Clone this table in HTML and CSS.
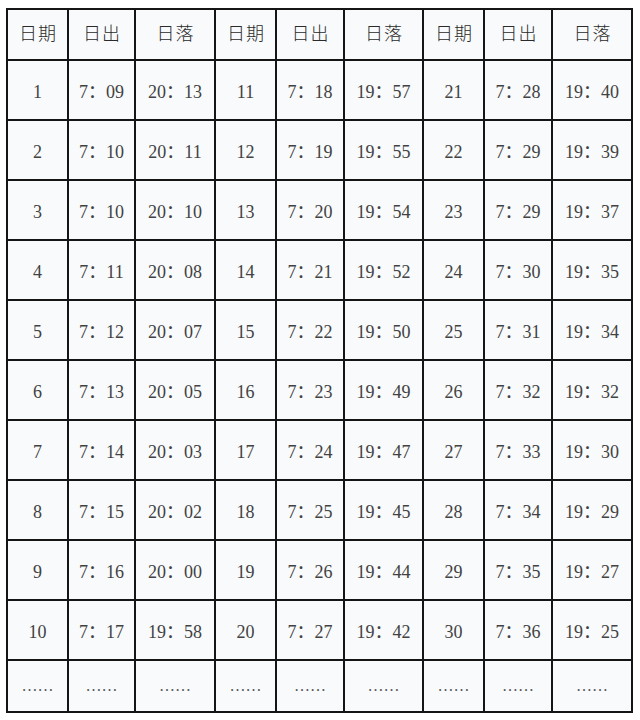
FILE: index.html
```html
<!DOCTYPE html>
<html lang="zh">
<head>
<meta charset="utf-8">
<link rel="stylesheet" href="styles.css">
</head>
<body>
<div class="sheet">
  <div class="h">日期</div><div class="h">日出</div><div class="h">日落</div>
  <div class="h">日期</div><div class="h">日出</div><div class="h">日落</div>
  <div class="h">日期</div><div class="h">日出</div><div class="h">日落</div>

  <div>1</div><div>7：09</div><div>20：13</div><div>11</div><div>7：18</div><div>19：57</div><div>21</div><div>7：28</div><div>19：40</div>
  <div>2</div><div>7：10</div><div>20：11</div><div>12</div><div>7：19</div><div>19：55</div><div>22</div><div>7：29</div><div>19：39</div>
  <div>3</div><div>7：10</div><div>20：10</div><div>13</div><div>7：20</div><div>19：54</div><div>23</div><div>7：29</div><div>19：37</div>
  <div>4</div><div>7：11</div><div>20：08</div><div>14</div><div>7：21</div><div>19：52</div><div>24</div><div>7：30</div><div>19：35</div>
  <div>5</div><div>7：12</div><div>20：07</div><div>15</div><div>7：22</div><div>19：50</div><div>25</div><div>7：31</div><div>19：34</div>
  <div>6</div><div>7：13</div><div>20：05</div><div>16</div><div>7：23</div><div>19：49</div><div>26</div><div>7：32</div><div>19：32</div>
  <div>7</div><div>7：14</div><div>20：03</div><div>17</div><div>7：24</div><div>19：47</div><div>27</div><div>7：33</div><div>19：30</div>
  <div>8</div><div>7：15</div><div>20：02</div><div>18</div><div>7：25</div><div>19：45</div><div>28</div><div>7：34</div><div>19：29</div>
  <div>9</div><div>7：16</div><div>20：00</div><div>19</div><div>7：26</div><div>19：44</div><div>29</div><div>7：35</div><div>19：27</div>
  <div>10</div><div>7：17</div><div>19：58</div><div>20</div><div>7：27</div><div>19：42</div><div>30</div><div>7：36</div><div>19：25</div>

  <div class="e">……</div><div class="e">……</div><div class="e">……</div>
  <div class="e">……</div><div class="e">……</div><div class="e">……</div>
  <div class="e">……</div><div class="e">……</div><div class="e">……</div>
</div>
</body>
</html>
```
FILE: styles.css
```css
html, body {
  margin: 0;
  padding: 0;
  background: #ffffff;
}
body {
  padding: 8px 0 0 6px;
}
.sheet {
  display: grid;
  grid-template-columns: 59px 65px 78px 59px 66px 77px 59px 66px 78px;
  grid-template-rows: 49px repeat(10, 58px) 50px;
  gap: 2px;
  padding: 2px;
  width: max-content;
  background: #151515;
}
.sheet > div {
  background: #f9fafc;
  display: flex;
  align-items: center;
  justify-content: center;
  font-family: "Liberation Serif", "Noto Sans CJK SC", serif;
  font-size: 18px;
  line-height: 20px;
  padding-top: 3px;
  color: #424242;
  white-space: nowrap;
}
.sheet > .h {
  font-family: "Noto Sans CJK SC", sans-serif;
  font-weight: 300;
  font-size: 18px;
  line-height: 20px;
  letter-spacing: 1px;
  padding: 0 0 5px 1px;
  color: #2a2a2a;
}
.sheet > .e {
  font-size: 16px;
  padding-top: 0;
  color: #555;
}
```
